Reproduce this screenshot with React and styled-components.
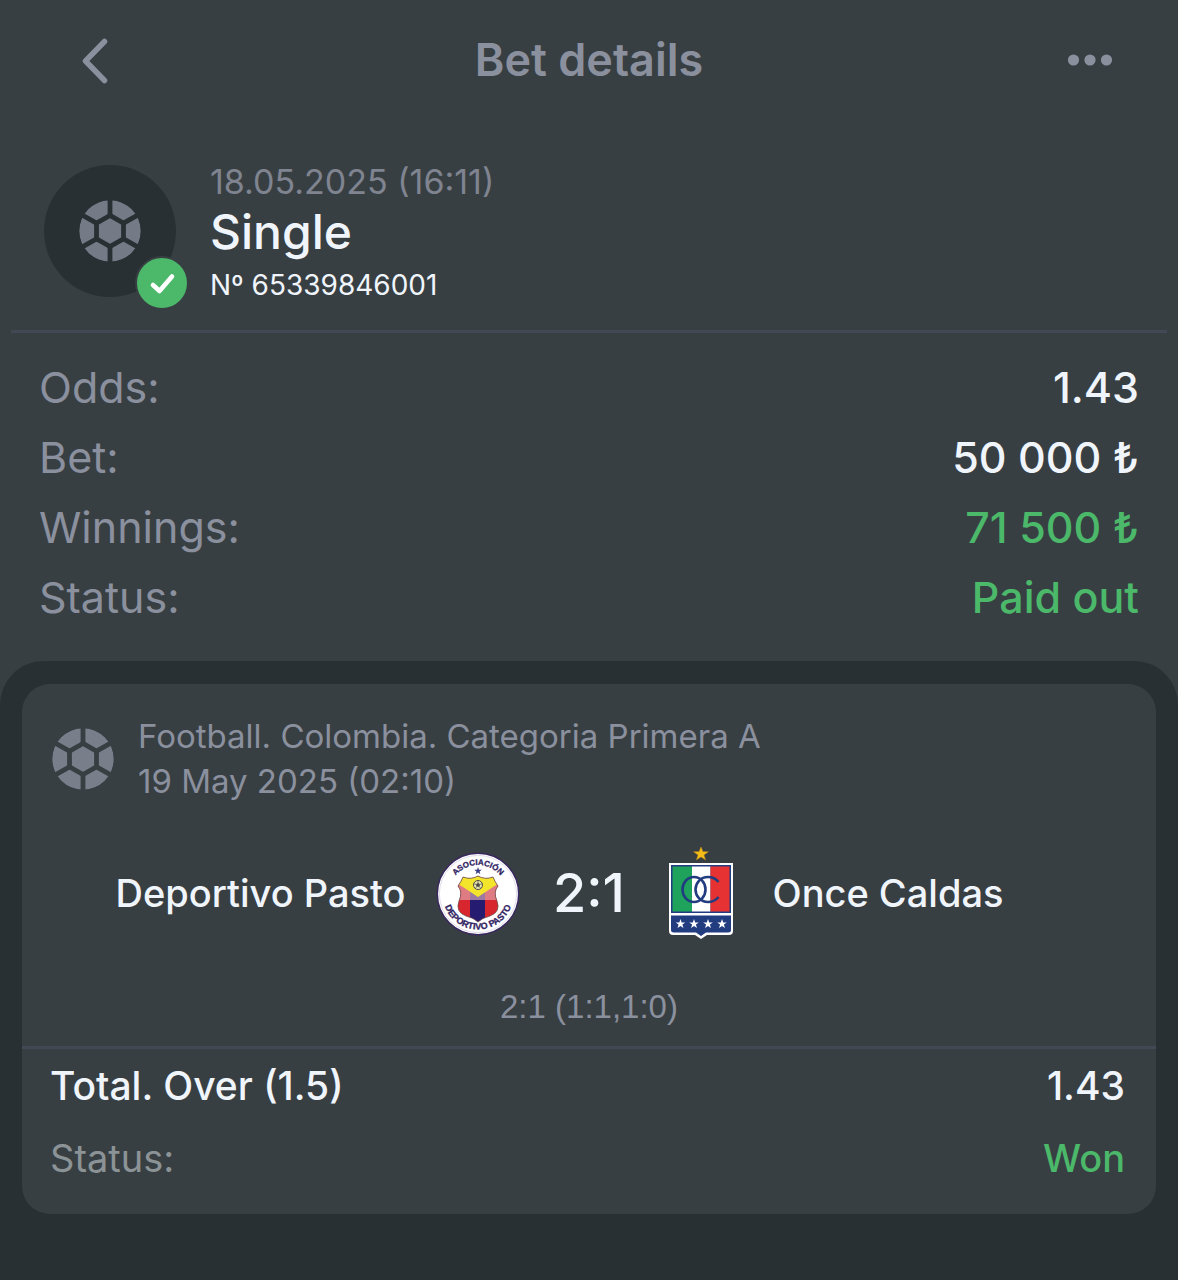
import React, { useId } from "react";
import styled, { createGlobalStyle } from "styled-components";

const colors = {
  surface: "#383f43",
  sunken: "#293034",
  line: "#424954",
  muted: "#8b909e",
  dim: "#7f8490",
  grey: "#8b9396",
  text: "#f0f5fc",
  green: "#4bb86a",
};

const GlobalStyle = createGlobalStyle`
  *, *::before, *::after { box-sizing: border-box; }
  body {
    margin: 0;
    background: ${colors.sunken};
    font-family: Inter, "Liberation Sans", sans-serif;
    color: ${colors.text};
  }
  h1, h2, p, dl, dd { margin: 0; }
`;

const Page = styled.div`
  display: flex;
  flex-direction: column;
  min-height: 100vh;
  background: ${colors.surface};
`;

const TopBar = styled.header`
  display: grid;
  grid-template-columns: 100px 1fr 100px;
  align-items: center;
  height: 120px;
  padding: 0 40px;
`;

const Title = styled.h1`
  font-size: 45px;
  font-weight: 600;
  line-height: 58px;
  text-align: center;
  color: ${colors.muted};
`;

const IconButton = styled.button`
  display: flex;
  align-items: center;
  justify-content: center;
  width: 100px;
  height: 80px;
  padding: 0;
  border: 0;
  background: none;
  color: ${colors.muted};
  cursor: pointer;
  svg { display: block; }
`;

const Summary = styled.section`
  display: flex;
  gap: 34px;
  margin: 0 11px;
  padding: 43px 33px 23px;
  border-bottom: 3px solid ${colors.line};
`;

const Avatar = styled.div`
  position: relative;
  display: flex;
  align-items: center;
  justify-content: center;
  width: 132px;
  height: 132px;
  margin-top: 2px;
  border-radius: 50%;
  background: ${colors.sunken};
  color: #747a86;
`;

const WonBadge = styled.span`
  position: absolute;
  right: -13px;
  bottom: -13px;
  display: flex;
  width: 54px;
  height: 54px;
  border: 2px solid ${colors.surface};
  border-radius: 50%;
  background: ${colors.green};
`;

const SummaryText = styled.div`
  display: flex;
  flex-direction: column;
`;

const DateText = styled.p`
  font-size: 34px;
  line-height: 38px;
  color: ${colors.dim};
`;

const BetType = styled.h2`
  font-size: 48px;
  font-weight: 500;
  line-height: 62px;
`;

const BetNumber = styled.p`
  font-size: 28px;
  line-height: 44px;
`;

const Facts = styled.dl`
  padding: 19px 39px 29px;
`;

const Fact = styled.div`
  display: flex;
  justify-content: space-between;
  font-size: 43px;
  line-height: 70px;
  dt { color: ${colors.muted}; }
  dd {
    font-weight: 500;
    color: ${(p) => (p.$good ? colors.green : colors.text)};
  }
`;

const Sheet = styled.main`
  flex: 1;
  padding: 23px 22px 66px;
  border-radius: 44px 44px 0 0;
  background: ${colors.sunken};
`;

const Card = styled.article`
  border-radius: 28px;
  background: ${colors.surface};
`;

const League = styled.div`
  display: flex;
  align-items: center;
  gap: 24px;
  padding: 30px 30px 0;
  color: #797e8b;
`;

const LeagueText = styled.p`
  font-size: 33px;
  line-height: 45px;
  color: ${colors.muted};
`;

const Match = styled.div`
  display: grid;
  grid-template-columns: 1fr 92px 131px 92px 1fr;
  align-items: center;
  height: 92px;
  margin-top: 43px;
  svg { display: block; }
`;

const Team = styled.span`
  padding: 0 26px;
  font-size: 38px;
  font-weight: 500;
  line-height: 48px;
  text-align: ${(p) => (p.$home ? "right" : "left")};
`;

const Score = styled.strong`
  font-size: 54px;
  font-weight: 500;
  line-height: 62px;
  text-align: center;
`;

const Periods = styled.p`
  padding: 45px 0 17px;
  border-bottom: 3px solid ${colors.line};
  font-family: "Liberation Sans", sans-serif;
  font-size: 33px;
  line-height: 45px;
  text-align: center;
  color: ${colors.muted};
`;

const Outcome = styled.dl`
  padding: 1px 31px 20px 28px;
`;

const OutcomeRow = styled.div`
  display: flex;
  justify-content: space-between;
  font-size: ${(p) => (p.$status ? 38 : 39)}px;
  line-height: 72px;
  dt {
    font-weight: ${(p) => (p.$status ? 400 : 500)};
    color: ${(p) => (p.$status ? colors.grey : colors.text)};
  }
  dd {
    font-weight: 500;
    color: ${(p) => (p.$status ? colors.green : colors.text)};
  }
`;

const STAR =
  "M0-10 2.4-3.2 9.5-3.1 3.8 1.2 5.9 8.1 0 4-5.9 8.1-3.8 1.2-9.5-3.1-2.4-3.2Z";

const SHIELD =
  "M-15-17Q-7-14 0-18 7-14 15-17 17-12 20-8 15-2 19 7 23 18 12 22 4 24 0 28-4 24-12 22-23 18-19 7-15-2-20-8-17-12-15-17Z";

function BallIcon() {
  const id = useId();
  return (
    <svg width="62" height="62" viewBox="-31 -31 62 62" aria-hidden="true">
      <mask id={id} maskUnits="userSpaceOnUse" x="-31" y="-31" width="62" height="62">
        <circle r="30.7" fill="#fff" />
        <g fill="none" stroke="#000" strokeWidth="4.8">
          <path d="M0-15.6 13.5-7.8V7.8L0 15.6-13.5 7.8V-7.8Z" />
          <path d="M0-15.6V-33M13.5-7.8 29-16.7M13.5 7.8 29 16.7M0 15.6V33M-13.5 7.8-29 16.7M-13.5-7.8-29-16.7" />
        </g>
      </mask>
      <circle r="31" fill="currentColor" mask={`url(#${id})`} />
    </svg>
  );
}

function PastoBadge() {
  const id = useId();
  return (
    <svg width="92" height="92" viewBox="-46 -47 92 92" role="img" aria-label="Deportivo Pasto">
      <defs>
        <path id={`${id}t`} d="M-29 0A29 29 0 0 1 29 0" />
        <path id={`${id}b`} d="M-35.5 0A35.5 35.5 0 0 0 35.5 0" />
        <clipPath id={`${id}s`}>
          <path d={SHIELD} />
        </clipPath>
      </defs>
      <circle r="40.7" fill="#fff" stroke="#39275f" strokeWidth="1.5" />
      <circle r="38.6" fill="none" stroke="#d8d3e3" strokeWidth="0.8" />
      <g
        fill="#302363"
        fontFamily="'Liberation Sans', sans-serif"
        fontWeight="700"
        fontSize="8"
        stroke="#302363"
        strokeWidth="0.3"
        textAnchor="middle"
      >
        <text>
          <textPath href={`#${id}t`} startOffset="50%">ASOCIACIÓN</textPath>
        </text>
        <text fontSize="9">
          <textPath href={`#${id}b`} startOffset="50%">DEPORTIVO PASTO</textPath>
        </text>
      </g>
      <path d={STAR} transform="translate(0 -23) scale(.4)" fill="#3b3b83" />
      <g clipPath={`url(#${id}s)`}>
        <path fill="#d7262d" d="M-25-20H25V30H-25Z" />
        <path fill="#251b70" d="M-8-5H7V30H-8Z" />
        <path fill="#df7b82" d="M-25-12H25V6H-25Z" />
        <path fill="#9d7aa2" d="M-8-5H7V6H-8Z" />
        <path fill="#f3e52c" d="M-25-20H25V-13L15-7 0 3-15-7-25-13Z" />
      </g>
      <path fill="none" stroke="#6d4c50" strokeWidth="0.8" d={SHIELD} />
      <circle cy="-9" r="4.5" fill="#e9e9b4" stroke="#504c43" strokeWidth="1" />
      <path
        d="M0-11 1.9-9.6 1.2-7.4H-1.2L-1.9-9.6ZM0-13.5V-11M1.9-9.6 4.5-10.4M1.2-7.4 2.8-5.5M-1.2-7.4-2.8-5.5M-1.9-9.6-4.5-10.4"
        fill="#504c43"
        stroke="#504c43"
        strokeWidth="0.6"
      />
    </svg>
  );
}

function CaldasCrest() {
  return (
    <svg width="92" height="92" viewBox="0 0 92 92" role="img" aria-label="Once Caldas">
      <path d={STAR} transform="translate(46 7) scale(.8 .75)" fill="#f5bd18" stroke="#a8761d" strokeWidth="0.6" />
      <path d="M14 16H78V84Q78 88 74 88H52L46 92 40 88H18Q14 88 14 84Z" fill="#fff" />
      <path d="M16 18H76V66H16Z" fill="#223c80" />
      <path d="M17.5 19.5H37V64.5H17.5Z" fill="#1fa35c" />
      <path d="M37 19.5H55.5V64.5H37Z" fill="#fff" />
      <path d="M55.5 19.5H74.5V64.5H55.5Z" fill="#e63232" />
      <path d="M16 68.5H76V83Q76 85.5 73 85.5H51L46 89 41 85.5H19Q16 85.5 16 83Z" fill="#223c80" />
      <g fill="none" stroke="#223c80" strokeWidth="2.6">
        <ellipse cx="39" cy="42.5" rx="11.5" ry="12.5" />
        <path d="M63.5 35Q59.5 30 53 30C45.5 30 40.5 36 40.5 42.5S45.5 55 53 55Q59.5 55 63.5 50" />
      </g>
      {[25.5, 39, 53, 67].map((x) => (
        <path key={x} d={STAR} transform={`translate(${x} 77) scale(.5)`} fill="#fff" />
      ))}
    </svg>
  );
}

const facts = [
  { label: "Odds:", value: "1.43" },
  { label: "Bet:", value: "50 000 ₺" },
  { label: "Winnings:", value: "71 500 ₺", good: true },
  { label: "Status:", value: "Paid out", good: true },
];

export default function App() {
  return (
    <Page>
      <GlobalStyle />
      <TopBar>
        <IconButton type="button" aria-label="Back">
          <svg width="40" height="48" viewBox="0 0 40 48" fill="none" stroke="currentColor" strokeWidth="5.5" strokeLinecap="round" strokeLinejoin="round">
            <path d="M34.5 5.5 15.5 25 34.5 44.5" />
          </svg>
        </IconButton>
        <Title>Bet details</Title>
        <IconButton type="button" aria-label="More options">
          <svg width="50" height="12" viewBox="0 0 50 12" fill="currentColor">
            <circle cx="10.5" cy="6" r="5.6" />
            <circle cx="27" cy="6" r="5.6" />
            <circle cx="43.5" cy="6" r="5.6" />
          </svg>
        </IconButton>
      </TopBar>

      <Summary>
        <Avatar>
          <BallIcon />
          <WonBadge>
            <svg width="50" height="50" viewBox="0 0 50 50" fill="none" stroke="#fff" strokeWidth="4.6" strokeLinecap="round" strokeLinejoin="round" aria-hidden="true">
              <path d="M16 27 22.5 33 35 18.5" />
            </svg>
          </WonBadge>
        </Avatar>
        <SummaryText>
          <DateText>18.05.2025 (16:11)</DateText>
          <BetType>Single</BetType>
          <BetNumber>Nº 65339846001</BetNumber>
        </SummaryText>
      </Summary>

      <Facts>
        {facts.map((f) => (
          <Fact key={f.label} $good={f.good}>
            <dt>{f.label}</dt>
            <dd>{f.value}</dd>
          </Fact>
        ))}
      </Facts>

      <Sheet>
        <Card>
          <League>
            <BallIcon />
            <LeagueText>
              Football. Colombia. Categoria Primera A
              <br />
              19 May 2025 (02:10)
            </LeagueText>
          </League>
          <Match>
            <Team $home>Deportivo Pasto</Team>
            <PastoBadge />
            <Score>2:1</Score>
            <CaldasCrest />
            <Team>Once Caldas</Team>
          </Match>
          <Periods>2:1 (1:1,1:0)</Periods>
          <Outcome>
            <OutcomeRow>
              <dt>Total. Over (1.5)</dt>
              <dd>1.43</dd>
            </OutcomeRow>
            <OutcomeRow $status>
              <dt>Status:</dt>
              <dd>Won</dd>
            </OutcomeRow>
          </Outcome>
        </Card>
      </Sheet>
    </Page>
  );
}
